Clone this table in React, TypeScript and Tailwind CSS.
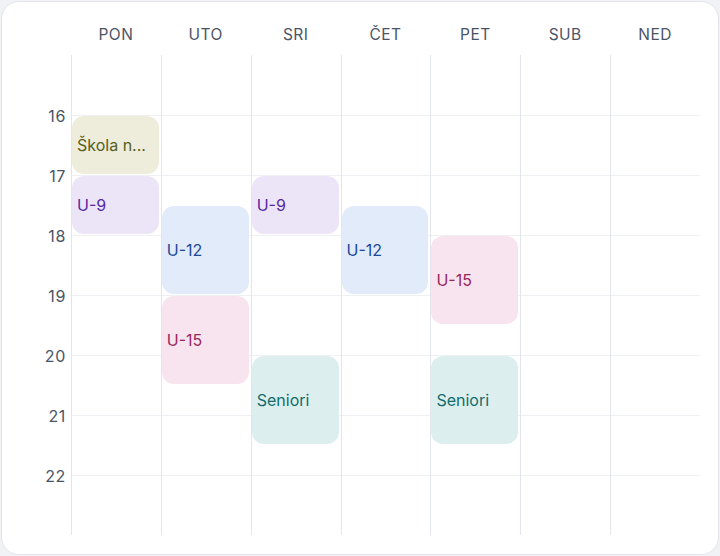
const DAYS = ['PON', 'UTO', 'SRI', 'ČET', 'PET', 'SUB', 'NED']
const START = 15
const END = 23
const HOUR = 60

type Tone = 'olive' | 'purple' | 'blue' | 'pink' | 'teal'

interface Session {
  day: number
  from: number
  to: number
  title: string
  tone: Tone
}

const SESSIONS: Session[] = [
  { day: 0, from: 16, to: 17, title: 'Škola n...', tone: 'olive' },
  { day: 0, from: 17, to: 18, title: 'U-9', tone: 'purple' },
  { day: 1, from: 17.5, to: 19, title: 'U-12', tone: 'blue' },
  { day: 1, from: 19, to: 20.5, title: 'U-15', tone: 'pink' },
  { day: 2, from: 17, to: 18, title: 'U-9', tone: 'purple' },
  { day: 2, from: 20, to: 21.5, title: 'Seniori', tone: 'teal' },
  { day: 3, from: 17.5, to: 19, title: 'U-12', tone: 'blue' },
  { day: 4, from: 18, to: 19.5, title: 'U-15', tone: 'pink' },
  { day: 4, from: 20, to: 21.5, title: 'Seniori', tone: 'teal' },
]

const TONES: Record<Tone, string> = {
  olive: 'bg-[#eeeddb] text-[#56601c]',
  purple: 'bg-[#ece5f7] text-[#56299f]',
  blue: 'bg-[#e1ebf9] text-[#1c4898]',
  pink: 'bg-[#f8e4ee] text-[#97285c]',
  teal: 'bg-[#dcefee] text-[#126c6b]',
}

const hours = Array.from({ length: END - START }, (_, i) => START + i)

export default function App() {
  return (
    <div className="h-[556px] w-[720px] bg-[#f1f2f5] p-px" style={{ fontFamily: 'Inter, "Noto Sans", sans-serif' }}>
      <div className="h-full rounded-[18px] border border-[#e4e6eb] bg-white pr-[18px]">
        {/* Day headers */}
        <div className="flex h-[53px]">
          <div className="w-[69px] shrink-0" />
          <div className="grid flex-1 grid-cols-7">
            {DAYS.map(d => (
              <div key={d} className="pt-[22px] text-center text-[15.5px] leading-[22px] tracking-[0.03em] text-[#4b5466]">
                {d}
              </div>
            ))}
          </div>
        </div>

        <div className="flex">
          {/* Hour labels */}
          <div className="w-[69px] shrink-0">
            {hours.map(h => (
              <div key={h} className="relative h-[60px]">
                {h > START && (
                  <span className="absolute right-[5px] top-[-10px] text-[16px] leading-[22px] tracking-[0.04em] text-[#4b5466]">
                    {h}
                  </span>
                )}
              </div>
            ))}
          </div>

          {/* Grid */}
          <div className="relative h-[480px] flex-1">
            <div className="flex flex-col">
              {hours.map(h => (
                <div
                  key={h}
                  className={h > START ? 'h-[60px] border-t border-[#eef0f3]' : 'h-[60px]'}
                />
              ))}
            </div>
            <div className="absolute inset-0 grid grid-cols-7">
              {DAYS.map((d, i) => (
                <div key={d} className="relative border-l border-[#e3e5ee]">
                  {SESSIONS.filter(s => s.day === i).map(s => (
                    <div
                      key={s.title + s.from}
                      className={`absolute left-0 right-[2px] flex items-center rounded-[12px] pl-[5px] pr-[2px] text-[16px] ${TONES[s.tone]}`}
                      style={{ top: (s.from - START) * HOUR + 1, height: (s.to - s.from) * HOUR - 2 }}
                    >
                      <span className="whitespace-nowrap">{s.title}</span>
                    </div>
                  ))}
                </div>
              ))}
            </div>
          </div>
        </div>
      </div>
    </div>
  )
}
